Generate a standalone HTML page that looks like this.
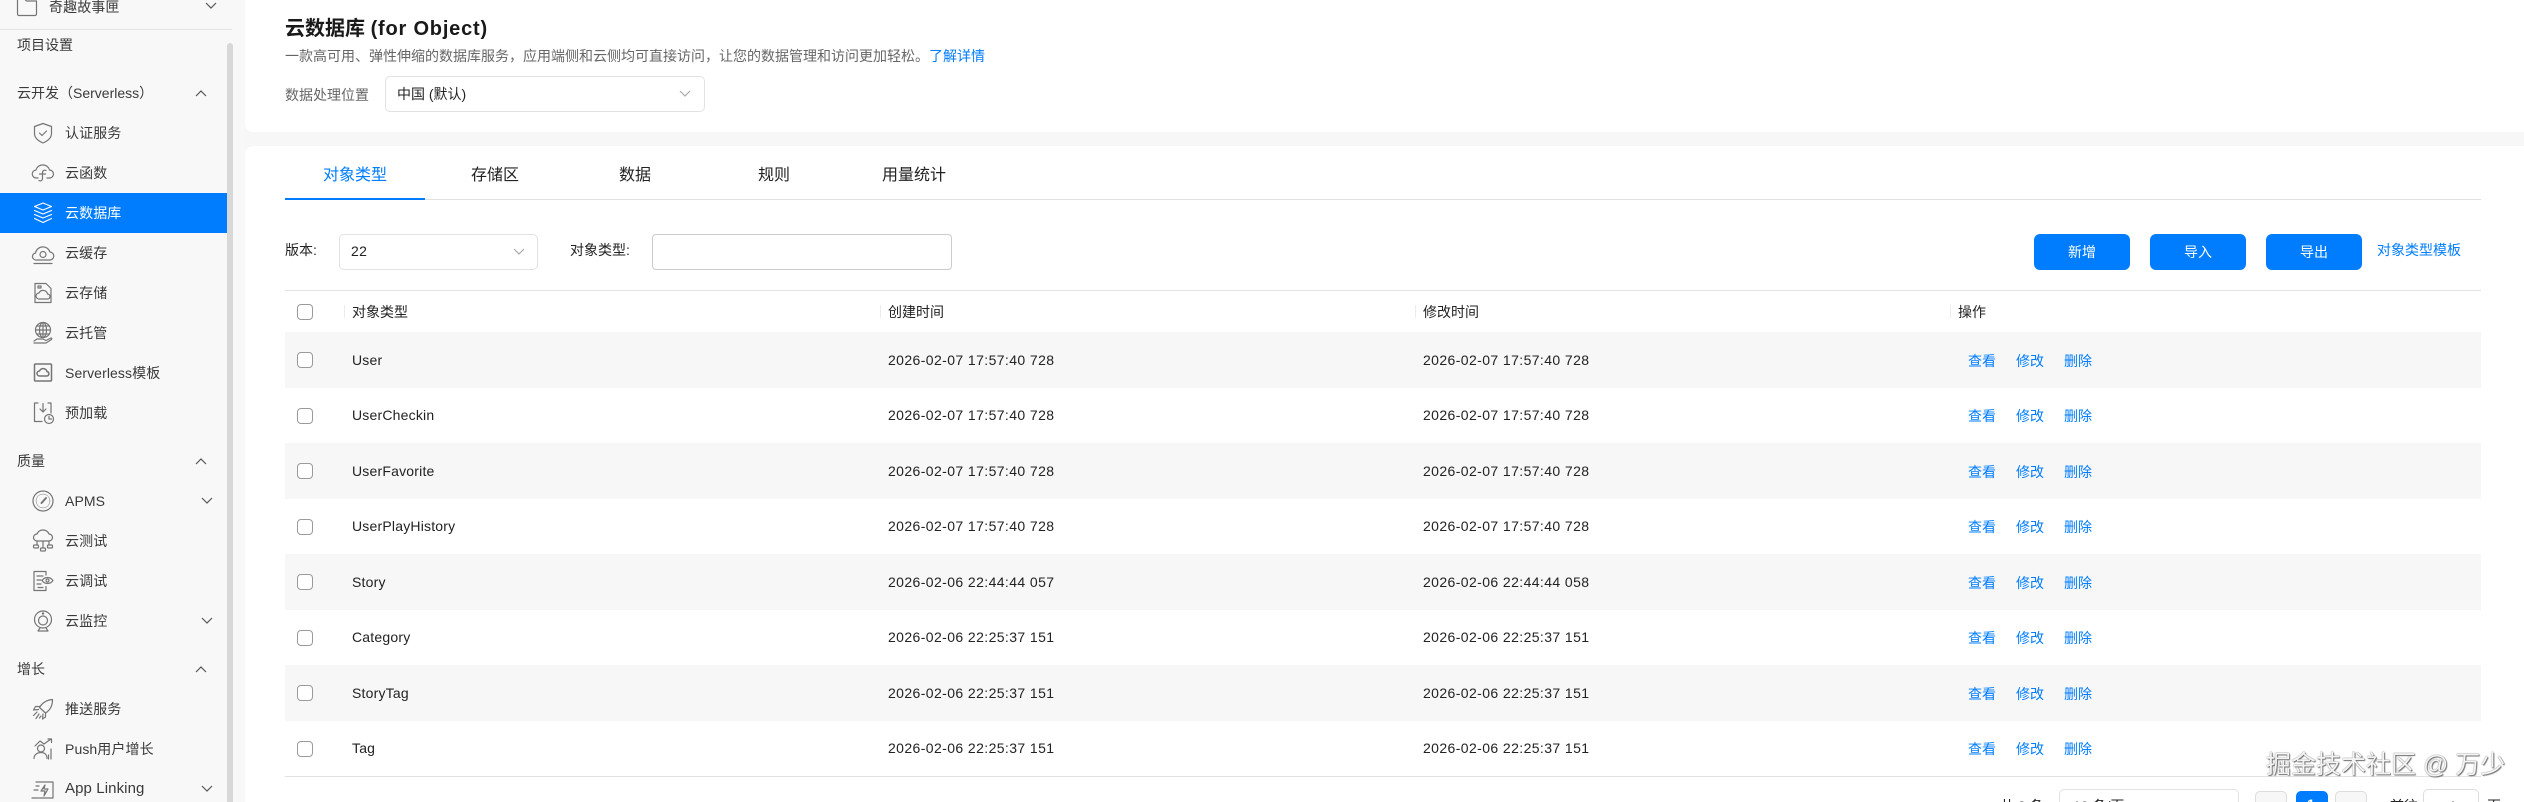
<!DOCTYPE html>
<html lang="zh"><head><meta charset="utf-8"><title>云数据库</title>
<style>
html,body{margin:0;padding:0;width:2524px;height:802px;overflow:hidden;background:#f7f7f7}
body{position:relative;font-family:"Liberation Sans","Noto Sans CJK SC",sans-serif;font-size:14px;color:#333}
.t,.b,svg{position:absolute}
.t{height:20px;line-height:20px;white-space:nowrap}
.side{position:absolute;left:0;top:0;width:245px;height:802px;background:#f8f8f9}
.ic{width:24px;height:24px;left:31px;fill:none;stroke:#757575;stroke-width:1.2;stroke-linecap:round;stroke-linejoin:round}
.ch{width:12px;height:8px;fill:none;stroke:#555;stroke-width:1.2}
.n{left:65px;color:#3a3a3a;letter-spacing:.1px}
.s{left:17px;color:#3a3a3a}
.row{position:absolute;left:285px;width:2196px;height:55.5px}
.g{background:#f7f7f7}
.cb{position:absolute;left:297px;width:14px;height:14px;border:1px solid #9a9a9a;border-radius:4px;background:#fff}
.d{letter-spacing:.4px;color:#222}
.l{color:#007dff}
.btn{position:absolute;top:234px;width:96px;height:36px;background:#007dff;border-radius:6px;color:#fff;text-align:center;line-height:36px}
.sep{position:absolute;top:305px;width:1px;height:13px;background:#ececec}
.pg{position:absolute;top:791px;width:30px;height:30px;border:1px solid #ddd;border-radius:5px;background:#f7f7f7}
</style></head><body>

<div class="side"></div>
<div class="b" style="left:0;top:29px;width:232px;height:1px;background:#e4e4e4"></div>
<div class="b" style="left:227px;top:43px;width:6px;height:759px;background:#d8d8d8;border-radius:3px 3px 0 0"></div>
<div class="b" style="left:0;top:193px;width:227px;height:40px;background:#007dff"></div>

<svg class="ic" style="top:-5px;left:15px" viewBox="0 0 24 24"><path d="M2.500 4h7l2 2h10v13a1.500 1.500 0 0 1-1.500 1.500H4A1.500 1.500 0 0 1 2.500 19Z"/></svg>
<div class="t n" style="left:49px;top:-3px">奇趣故事匣</div>
<svg class="ch" style="left:205px;top:2px" viewBox="0 0 12 8"><path d="M1 1l5 5 5-5"/></svg>
<div class="t s" style="top:35px">项目设置</div>

<div class="t s" style="top:83px">云开发（Serverless）</div>
<svg class="ch" style="left:195px;top:89px" viewBox="0 0 12 8"><path d="M1 7l5-5 5 5"/></svg>

<svg class="ic" style="top:121px" viewBox="0 0 24 24"><path d="M12 2.500l8.500 3v7c0 4.500-4 7.500-8.500 9.500-4.500-2-8.500-5-8.500-9.500v-7Z"/><path d="M8.500 12l2.500 2.500 4.500-4.500"/></svg>
<div class="t n" style="top:123px">认证服务</div>

<svg class="ic" style="top:161px" viewBox="0 0 24 24"><path d="M7 17H5.500a4 4 0 0 1-.5-8 7 7 0 0 1 13.500 0 4 4 0 0 1 0 8H16"/><path d="M15 9.500c-2.500-1-3.500 .5-3.500 2.500v5c0 2.500-1.500 3.500-3.500 2.500M8.500 13h6"/></svg>
<div class="t n" style="top:163px">云函数</div>

<svg class="ic" style="top:201px;stroke:#fff" viewBox="0 0 24 24"><path d="M12 2l8.500 3.500L12 9 3.500 5.500Z"/><path d="M3.500 9.500L12 13l8.500-3.500M3.500 13.500L12 17l8.500-3.500M3.500 17.500L12 21.500l8.500-4"/></svg>
<div class="t n" style="top:203px;color:#fff">云数据库</div>

<svg class="ic" style="top:241px" viewBox="0 0 24 24"><path d="M7 19H5.500A3.500 3.500 0 0 1 4.500 12 7.500 7.500 0 0 1 19 11a4 4 0 0 1-.5 8H7Z"/><circle cx="12" cy="13.500" r="3"/><path d="M3 22.500h18"/></svg>
<div class="t n" style="top:243px">云缓存</div>

<svg class="ic" style="top:281px" viewBox="0 0 24 24"><path d="M4 2.500h11l5 5v14H4Z"/><path d="M7 5h3v2H7Z"/><path d="M8 18a3 3 0 0 1 0-6 4.500 4.500 0 0 1 8.500 1 2.500 2.500 0 0 1 0 5Z"/></svg>
<div class="t n" style="top:283px">云存储</div>

<svg class="ic" style="top:321px" viewBox="0 0 24 24"><circle cx="12" cy="9" r="7.500"/><path d="M4.500 9h15M12 1.500v15M6 5h12M6 13h12"/><ellipse cx="12" cy="9" rx="3.500" ry="7.500"/><path d="M3 20l3-2h6l3 1.500 5-2.500c1 0 1 1 .5 1.500L15 22H3"/></svg>
<div class="t n" style="top:323px">云托管</div>

<svg class="ic" style="top:361px;stroke-width:1.500" viewBox="0 0 24 24"><rect x="3.500" y="3" width="17" height="17" rx="1"/><path d="M8.500 15a2.500 2.500 0 0 1 0-5 4 4 0 0 1 7.500 .5 2.300 2.300 0 0 1 0 4.500Z"/></svg>
<div class="t n" style="top:363px">Serverless模板</div>

<svg class="ic" style="top:401px" viewBox="0 0 24 24"><path d="M7 2H3.500v18.500H11M17 2h3v10"/><path d="M12 2.500v8M9 8l3 3 3-3"/><circle cx="18" cy="18" r="4.500"/><path d="M18 15.500V18h2.500"/></svg>
<div class="t n" style="top:403px">预加载</div>

<div class="t s" style="top:451px">质量</div>
<svg class="ch" style="left:195px;top:457px" viewBox="0 0 12 8"><path d="M1 7l5-5 5 5"/></svg>

<svg class="ic" style="top:489px" viewBox="0 0 24 24"><circle cx="12" cy="12" r="10"/><circle cx="12" cy="12" r="7" stroke-width=".5"/><path d="M10.500 14l4.500-5" stroke-width="2"/></svg>
<div class="t n" style="top:491px">APMS</div>
<svg class="ch" style="left:201px;top:497px" viewBox="0 0 12 8"><path d="M1 1l5 5 5-5"/></svg>

<svg class="ic" style="top:529px" viewBox="0 0 24 24"><path d="M7 12H6a3.500 3.500 0 0 1 0-7 6.500 6.500 0 0 1 12 0 3.500 3.500 0 0 1 0 7H7Z"/><path d="M12 12v6M6 12v4M18 12v4"/><rect x="2.500" y="16" width="5" height="3" rx="1"/><rect x="9.500" y="19" width="5" height="3" rx="1"/><rect x="16.500" y="16" width="5" height="3" rx="1"/></svg>
<div class="t n" style="top:531px">云测试</div>

<svg class="ic" style="top:569px" viewBox="0 0 24 24"><path d="M15 6V2.500H3v19h12v-4"/><path d="M6 7h6M6 11h4M6 15h4M7 18.500h5"/><path d="M11 11.500c3-4 8-4 11 0-3 4-8 4-11 0Z"/><circle cx="16.500" cy="11.500" r="1.500"/></svg>
<div class="t n" style="top:571px">云调试</div>

<svg class="ic" style="top:609px" viewBox="0 0 24 24"><circle cx="12" cy="10.500" r="8.500"/><circle cx="12" cy="11.500" r="4.500"/><circle cx="12" cy="4.500" r=".6"/><path d="M9 19l-2 3h10l-2-3"/></svg>
<div class="t n" style="top:611px">云监控</div>
<svg class="ch" style="left:201px;top:617px" viewBox="0 0 12 8"><path d="M1 1l5 5 5-5"/></svg>

<div class="t s" style="top:659px">增长</div>
<svg class="ch" style="left:195px;top:665px" viewBox="0 0 12 8"><path d="M1 7l5-5 5 5"/></svg>

<svg class="ic" style="top:697px" viewBox="0 0 24 24"><path d="M21.500 2.500c-6 .5-10 3-13 8l6 5.500c5-3 7-7.500 7-13.500Z"/><path d="M9 9.500H4.500L2.500 13l5-.5M14.500 15.500v4.500l-3 2 .5-5"/><path d="M6 15l-3.500 3.500M8 17l-3 4.500M10 19l-1.500 2"/></svg>
<div class="t n" style="top:699px">推送服务</div>

<svg class="ic" style="top:737px" viewBox="0 0 24 24"><circle cx="10" cy="11.500" r="3.500"/><path d="M3 21.500c0-3.500 3-6 7-6s6 2.500 6 6"/><path d="M4 9l5-5 4 3 7-5M17 2h3.500v3.500"/><path d="M20 12v10M17.500 18v4" /></svg>
<div class="t n" style="top:739px">Push用户增长</div>

<svg class="ic" style="top:777px" viewBox="0 0 24 24"><path d="M5 5h17v16H8"/><path d="M14 8l-4 6h4l-1 5 4-7h-4Z"/><path d="M5 9h3M3 13h4M1 21h6"/></svg>
<div class="t n" style="top:779px;font-size:15px">App Linking</div>
<svg class="ch" style="left:201px;top:785px" viewBox="0 0 12 8"><path d="M1 1l5 5 5-5"/></svg>

<!-- top card -->
<div class="b" style="left:245px;top:0;width:2279px;height:132px;background:#fff;border-radius:0 0 0 8px"></div>
<div class="t" style="left:285px;top:17px;height:24px;line-height:24px;font-size:20px;font-weight:bold;color:#191919">云数据库 <span style="letter-spacing:.8px">(for Object)</span></div>
<div class="t" style="left:285px;top:46px;color:#666">一款高可用、弹性伸缩的数据库服务，应用端侧和云侧均可直接访问，让您的数据管理和访问更加轻松。<span class="l">了解详情</span></div>
<div class="t" style="left:285px;top:85px;color:#666">数据处理位置</div>
<div class="b" style="left:385px;top:76px;width:318px;height:34px;border:1px solid #e2e2e2;border-radius:5px"></div>
<div class="t" style="left:397px;top:84px;color:#222">中国 (默认)</div>
<svg class="ch" style="left:679px;top:90px;stroke:#aaa" viewBox="0 0 12 8"><path d="M1 1l5 5 5-5"/></svg>

<!-- main card -->
<div class="b" style="left:245px;top:146px;width:2279px;height:656px;background:#fff;border-radius:8px 0 0 0"></div>

<div class="t l" style="left:323px;top:166px;font-size:16px">对象类型</div>
<div class="t" style="left:471px;top:166px;font-size:16px;color:#222">存储区</div>
<div class="t" style="left:619px;top:166px;font-size:16px;color:#222">数据</div>
<div class="t" style="left:758px;top:166px;font-size:16px;color:#222">规则</div>
<div class="t" style="left:882px;top:166px;font-size:16px;color:#222">用量统计</div>
<div class="b" style="left:285px;top:199px;width:2196px;height:1px;background:#e2e2e2"></div>
<div class="b" style="left:285px;top:198px;width:140px;height:2px;background:#007dff"></div>

<div class="t" style="left:285px;top:240px;color:#222">版本:</div>
<div class="b" style="left:339px;top:234px;width:197px;height:34px;border:1px solid #e2e2e2;border-radius:5px"></div>
<div class="t" style="left:351px;top:241px;color:#222;letter-spacing:.4px">22</div>
<svg class="ch" style="left:513px;top:248px;stroke:#aaa" viewBox="0 0 12 8"><path d="M1 1l5 5 5-5"/></svg>
<div class="t" style="left:570px;top:240px;color:#222">对象类型:</div>
<div class="b" style="left:652px;top:234px;width:298px;height:34px;border:1px solid #ccc;border-radius:4px"></div>

<div class="btn" style="left:2034px">新增</div>
<div class="btn" style="left:2150px">导入</div>
<div class="btn" style="left:2266px">导出</div>
<div class="t l" style="left:2377px;top:240px">对象类型模板</div>

<div class="b" style="left:285px;top:290px;width:2196px;height:1px;background:#e2e2e2"></div>
<div class="cb" style="top:304px"></div>
<div class="sep" style="left:344px"></div><div class="t" style="left:352px;top:302px;color:#222">对象类型</div>
<div class="sep" style="left:880px"></div><div class="t" style="left:888px;top:302px;color:#222">创建时间</div>
<div class="sep" style="left:1415px"></div><div class="t" style="left:1423px;top:302px;color:#222">修改时间</div>
<div class="sep" style="left:1950px"></div><div class="t" style="left:1958px;top:302px;color:#222">操作</div>

<div class="row g" style="top:332px"></div>
<div class="row g" style="top:443px"></div>
<div class="row g" style="top:554px"></div>
<div class="row g" style="top:665px"></div>

<div class="cb" style="top:352px"></div><div class="t d" style="left:352px;top:350px;letter-spacing:.2px">User</div><div class="t d" style="left:888px;top:350px">2026-02-07 17:57:40 728</div><div class="t d" style="left:1423px;top:350px">2026-02-07 17:57:40 728</div><div class="t l" style="left:1968px;top:351px">查看</div><div class="t l" style="left:2016px;top:351px">修改</div><div class="t l" style="left:2064px;top:351px">删除</div>

<div class="cb" style="top:408px"></div><div class="t d" style="left:352px;top:405px;letter-spacing:.2px">UserCheckin</div><div class="t d" style="left:888px;top:405px">2026-02-07 17:57:40 728</div><div class="t d" style="left:1423px;top:405px">2026-02-07 17:57:40 728</div><div class="t l" style="left:1968px;top:406px">查看</div><div class="t l" style="left:2016px;top:406px">修改</div><div class="t l" style="left:2064px;top:406px">删除</div>

<div class="cb" style="top:463px"></div><div class="t d" style="left:352px;top:461px;letter-spacing:.2px">UserFavorite</div><div class="t d" style="left:888px;top:461px">2026-02-07 17:57:40 728</div><div class="t d" style="left:1423px;top:461px">2026-02-07 17:57:40 728</div><div class="t l" style="left:1968px;top:462px">查看</div><div class="t l" style="left:2016px;top:462px">修改</div><div class="t l" style="left:2064px;top:462px">删除</div>

<div class="cb" style="top:519px"></div><div class="t d" style="left:352px;top:516px;letter-spacing:.2px">UserPlayHistory</div><div class="t d" style="left:888px;top:516px">2026-02-07 17:57:40 728</div><div class="t d" style="left:1423px;top:516px">2026-02-07 17:57:40 728</div><div class="t l" style="left:1968px;top:517px">查看</div><div class="t l" style="left:2016px;top:517px">修改</div><div class="t l" style="left:2064px;top:517px">删除</div>

<div class="cb" style="top:574px"></div><div class="t d" style="left:352px;top:572px;letter-spacing:.2px">Story</div><div class="t d" style="left:888px;top:572px">2026-02-06 22:44:44 057</div><div class="t d" style="left:1423px;top:572px">2026-02-06 22:44:44 058</div><div class="t l" style="left:1968px;top:573px">查看</div><div class="t l" style="left:2016px;top:573px">修改</div><div class="t l" style="left:2064px;top:573px">删除</div>

<div class="cb" style="top:630px"></div><div class="t d" style="left:352px;top:627px;letter-spacing:.2px">Category</div><div class="t d" style="left:888px;top:627px">2026-02-06 22:25:37 151</div><div class="t d" style="left:1423px;top:627px">2026-02-06 22:25:37 151</div><div class="t l" style="left:1968px;top:628px">查看</div><div class="t l" style="left:2016px;top:628px">修改</div><div class="t l" style="left:2064px;top:628px">删除</div>

<div class="cb" style="top:685px"></div><div class="t d" style="left:352px;top:683px;letter-spacing:.2px">StoryTag</div><div class="t d" style="left:888px;top:683px">2026-02-06 22:25:37 151</div><div class="t d" style="left:1423px;top:683px">2026-02-06 22:25:37 151</div><div class="t l" style="left:1968px;top:684px">查看</div><div class="t l" style="left:2016px;top:684px">修改</div><div class="t l" style="left:2064px;top:684px">删除</div>

<div class="cb" style="top:741px"></div><div class="t d" style="left:352px;top:738px;letter-spacing:.2px">Tag</div><div class="t d" style="left:888px;top:738px">2026-02-06 22:25:37 151</div><div class="t d" style="left:1423px;top:738px">2026-02-06 22:25:37 151</div><div class="t l" style="left:1968px;top:739px">查看</div><div class="t l" style="left:2016px;top:739px">修改</div><div class="t l" style="left:2064px;top:739px">删除</div>

<div class="b" style="left:285px;top:776px;width:2196px;height:1px;background:#e2e2e2"></div>

<!-- pagination, cut by viewport -->
<div class="t" style="left:2000px;top:796px;color:#222">共 8 条</div>
<div class="b" style="left:2059px;top:789px;width:178px;height:34px;border:1px solid #e2e2e2;border-radius:5px"></div>
<div class="t" style="left:2073px;top:796px;color:#222">10 条/页</div>
<div class="pg" style="left:2255px"></div>
<div class="pg" style="left:2296px;background:#007dff;border-color:#007dff"></div>
<div class="t" style="left:2307px;top:794px;color:#fff;font-weight:bold">1</div>
<div class="pg" style="left:2335px"></div>
<div class="t" style="left:2390px;top:796px;color:#222">前往</div>
<div class="b" style="left:2423px;top:789px;width:54px;height:34px;border:1px solid #ddd;border-radius:5px"></div>
<div class="t" style="left:2449px;top:796px;color:#222">1</div>
<div class="t" style="left:2487px;top:796px;color:#222">页</div>

<!-- watermark -->
<div class="t" style="left:2266px;top:750px;height:30px;line-height:30px;font-size:25px;color:#f4f4f4;text-shadow:0 0 1px #444,1px 1px 1px #777">掘金技术社区 @ 万少</div>

</body></html>
